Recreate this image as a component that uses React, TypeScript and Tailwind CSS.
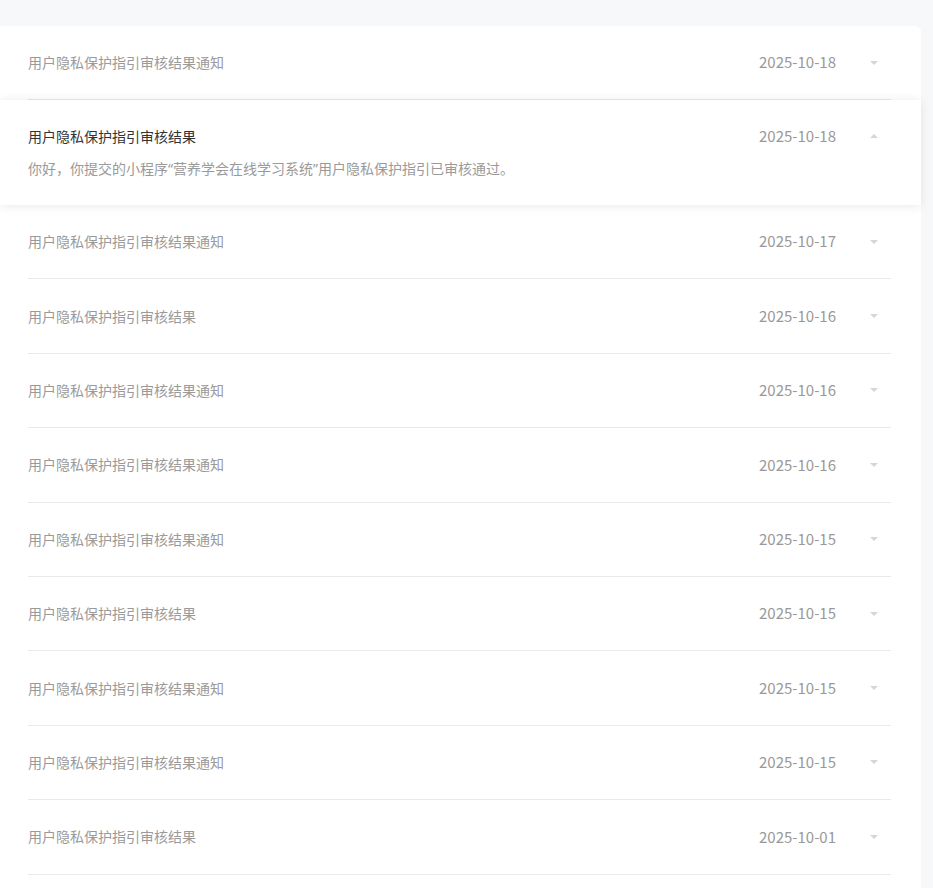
import { useState } from 'react';

interface Notice {
  id: number;
  title: string;
  date: string;
  content: string;
}

const msg = '你好，你提交的小程序“营养学会在线学习系统”用户隐私保护指引已审核通过。';

const notices: Notice[] = [
  { id: 1, title: '用户隐私保护指引审核结果通知', date: '2025-10-18', content: msg },
  { id: 2, title: '用户隐私保护指引审核结果', date: '2025-10-18', content: msg },
  { id: 3, title: '用户隐私保护指引审核结果通知', date: '2025-10-17', content: msg },
  { id: 4, title: '用户隐私保护指引审核结果', date: '2025-10-16', content: msg },
  { id: 5, title: '用户隐私保护指引审核结果通知', date: '2025-10-16', content: msg },
  { id: 6, title: '用户隐私保护指引审核结果通知', date: '2025-10-16', content: msg },
  { id: 7, title: '用户隐私保护指引审核结果通知', date: '2025-10-15', content: msg },
  { id: 8, title: '用户隐私保护指引审核结果', date: '2025-10-15', content: msg },
  { id: 9, title: '用户隐私保护指引审核结果通知', date: '2025-10-15', content: msg },
  { id: 10, title: '用户隐私保护指引审核结果通知', date: '2025-10-15', content: msg },
  { id: 11, title: '用户隐私保护指引审核结果', date: '2025-10-01', content: msg },
];

function Caret({ up }: { up?: boolean }) {
  return (
    <svg width="8" height="4" viewBox="0 0 8 4" className="block">
      {up ? <path d="M0 4 L4 0 L8 4 Z" fill="#d4d6da" /> : <path d="M0 0 L8 0 L4 4 Z" fill="#d4d6da" />}
    </svg>
  );
}

export default function App() {
  const [openId, setOpenId] = useState<number | null>(2);

  return (
    <div
      className="min-h-screen bg-[#f7f8fa] pt-[26px] pr-[12px]"
      style={{ fontFamily: '"Noto Sans CJK SC", "Noto Sans", sans-serif' }}
    >
      <div className="rounded-tr-[6px] bg-white pb-[40px]">
        {notices.map((n, i) => {
          const open = openId === n.id;
          if (open) {
            return (
              <div
                key={n.id}
                className="relative z-10 h-[105px] cursor-pointer bg-white pl-[28px] pr-[30px] pt-[26px] shadow-[0_1px_10px_rgba(0,0,0,0.09)]"
                onClick={() => setOpenId(null)}
              >
                <div className="flex h-[20px] items-center">
                  <span className="flex-1 text-[14px] leading-[20px] text-[#333]">{n.title}</span>
                  <span className="mr-[19px] text-[15px] text-[#999]">{n.date}</span>
                  <span className="flex w-[36px] justify-center pl-[1px]">
                    <Caret up />
                  </span>
                </div>
                <div className="mt-[13px] font-['Noto_Sans','Noto_Sans_CJK_SC',sans-serif] text-[14px] leading-[20px] text-[#9a9a9a]">
                  {n.content}
                </div>
              </div>
            );
          }
          return (
            <div
              key={n.id}
              className={`cursor-pointer pl-[28px] pr-[30px] ${i === 0 ? 'h-[74px]' : 'h-[74.4px]'}`}
              onClick={() => setOpenId(n.id)}
            >
              <div className="flex h-full items-center border-b border-[#e8e9ec]">
                <span className="flex-1 text-[14px] text-[#9a9a9a]">{n.title}</span>
                <span className="mr-[19px] text-[15px] text-[#999]">{n.date}</span>
                <span className="flex w-[36px] justify-center pl-[1px]">
                  <Caret />
                </span>
              </div>
            </div>
          );
        })}
      </div>
    </div>
  );
}
